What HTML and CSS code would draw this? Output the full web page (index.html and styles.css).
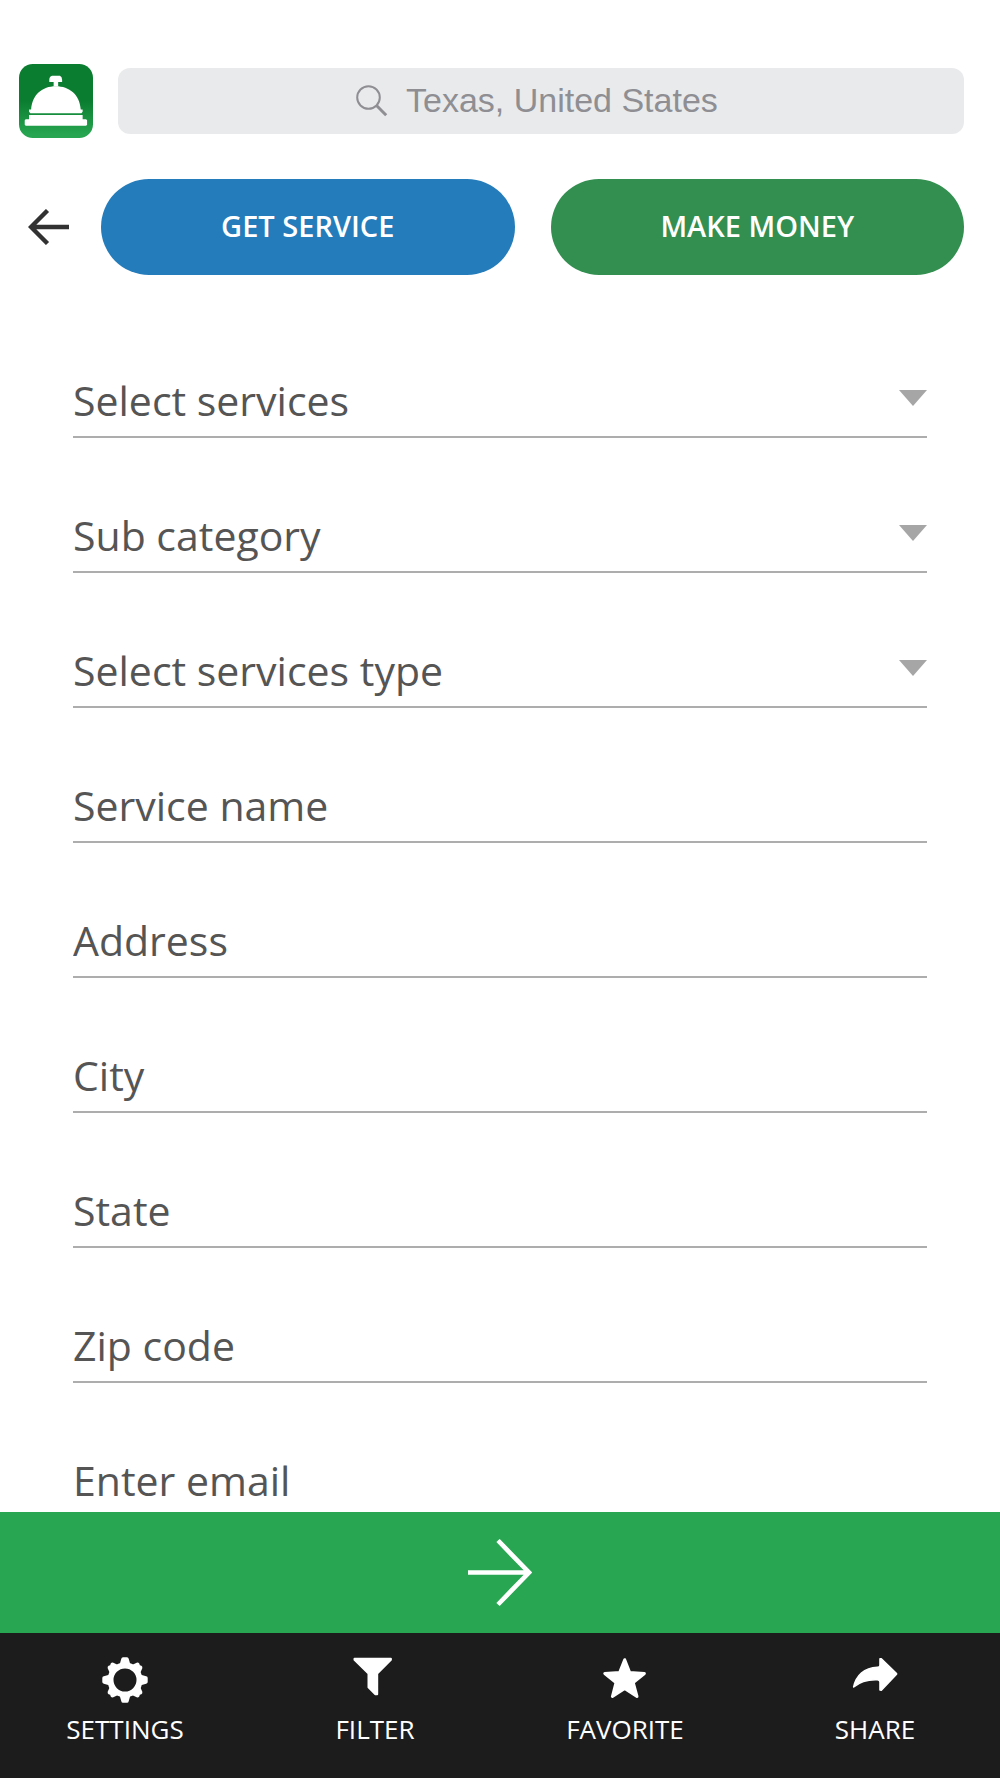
FILE: index.html
```html
<!DOCTYPE html>
<html lang="en">
<head>
<meta charset="utf-8">
<meta name="viewport" content="width=device-width, initial-scale=1">
<title>Get service</title>
<link rel="stylesheet" href="styles.css">
</head>
<body>
<div class="app">
  <header class="header">
    <div class="search-row">
      <svg class="logo" viewBox="0 0 75 75" role="img" aria-label="Service bell">
        <defs>
          <linearGradient id="logo-fill" x1="0" y1="0" x2="0" y2="1">
            <stop offset="0.5" stop-color="#0b7d30"/>
            <stop offset="0.95" stop-color="#27a550"/>
          </linearGradient>
        </defs>
        <rect width="75" height="75" rx="14" fill="url(#logo-fill)"/>
        <g fill="#fff">
          <path d="M33.500 12h8q2.200 1 2.200 4v2.300h-4v4.400h-4.600v-4.400h-4.400V16q0-3 2.800-4z"/>
          <path d="M12.300 46C13.500 31 23.500 22.500 37.300 22.500S61.500 31 62.600 46h1.900v2.500l-1.200 1.300H11.500L10.200 48.500V46z"/>
          <path d="M10.200 51.800h54.300V56h3.500l1 1v4.500l-1 1H6.800l-1-1V57l1-1h3.400z"/>
        </g>
      </svg>
      <label class="search">
        <svg class="search-icon" viewBox="0 0 32 32" aria-hidden="true">
          <circle cx="12.500" cy="12.500" r="11.300" fill="none" stroke="#8e8e93" stroke-width="2"/>
          <path d="M20.500 20.500l9.700 9.700" stroke="#8e8e93" stroke-width="3"/>
        </svg>
        <input class="search-input" type="text" placeholder="Texas, United States" aria-label="Location">
      </label>
    </div>
    <div class="tabs">
      <button class="back" type="button" aria-label="Back">
        <svg class="back-icon" viewBox="0 0 41 36" aria-hidden="true">
          <path d="M41 18H3M19.500 1.500L3 18l16.500 16.500" fill="none" stroke="#323232" stroke-width="4.400"/>
        </svg>
      </button>
      <button class="pill pill-blue" type="button">GET SERVICE</button>
      <button class="pill pill-green" type="button">MAKE MONEY</button>
    </div>
  </header>

  <form class="form" id="service-form">
    <div class="field">
      <select class="control" aria-label="Select services"><option>Select services</option></select>
      <svg class="caret" viewBox="0 0 28 16" aria-hidden="true"><path d="M0 0h28L14 16z" fill="#a6a6a6"/></svg>
    </div>
    <div class="field">
      <select class="control" aria-label="Sub category"><option>Sub category</option></select>
      <svg class="caret" viewBox="0 0 28 16" aria-hidden="true"><path d="M0 0h28L14 16z" fill="#a6a6a6"/></svg>
    </div>
    <div class="field">
      <select class="control" aria-label="Select services type"><option>Select services type</option></select>
      <svg class="caret" viewBox="0 0 28 16" aria-hidden="true"><path d="M0 0h28L14 16z" fill="#a6a6a6"/></svg>
    </div>
    <div class="field"><input class="control" type="text" placeholder="Service name" aria-label="Service name"></div>
    <div class="field"><input class="control" type="text" placeholder="Address" aria-label="Address"></div>
    <div class="field"><input class="control" type="text" placeholder="City" aria-label="City"></div>
    <div class="field"><input class="control" type="text" placeholder="State" aria-label="State"></div>
    <div class="field"><input class="control" type="text" placeholder="Zip code" aria-label="Zip code"></div>
    <div class="field"><input class="control" type="email" placeholder="Enter email" aria-label="Enter email"></div>
  </form>

  <button class="next" type="submit" form="service-form" aria-label="Next">
    <svg class="next-icon" viewBox="0 0 64 68" aria-hidden="true">
      <path d="M0 33.500h61M30 1.500L61 33.500 30 65.500" fill="none" stroke="#fff" stroke-width="4.600"/>
    </svg>
  </button>

  <nav class="nav">
    <a class="nav-item" href="#settings">
      <svg class="nav-icon" viewBox="0 0 46 46" aria-hidden="true">
        <defs>
          <path id="tooth" d="M17.500 8L19.300 1.800Q19.600.3 21 .3h4q1.400 0 1.700 1.500L28.500 8z"/>
          <path id="tooth-small" d="M17 8l2-5.500Q20 1 21.500 1.300L23 2l1.500-.7Q26 1 27 2.500L29 8z"/>
        </defs>
        <g fill="#fff">
          <use href="#tooth"/>
          <use href="#tooth" transform="rotate(90 23 23)"/>
          <use href="#tooth" transform="rotate(180 23 23)"/>
          <use href="#tooth" transform="rotate(270 23 23)"/>
          <use href="#tooth-small" transform="rotate(45 23 23)"/>
          <use href="#tooth-small" transform="rotate(135 23 23)"/>
          <use href="#tooth-small" transform="rotate(225 23 23)"/>
          <use href="#tooth-small" transform="rotate(315 23 23)"/>
        </g>
        <circle cx="23" cy="23" r="14.500" fill="none" stroke="#fff" stroke-width="6"/>
      </svg>
      SETTINGS
    </a>
    <a class="nav-item" href="#filter">
      <svg class="nav-icon" viewBox="0 0 46 46" aria-hidden="true">
        <path d="M2.500 1.700h36.400v1.100L25.200 16.600v20.600h-1.800l-6.900-6.900V16.600L2.500 2.800z" fill="#fff" stroke="#fff" stroke-width="2" stroke-linejoin="round"/>
      </svg>
      FILTER
    </a>
    <a class="nav-item" href="#favorite">
      <svg class="nav-icon" viewBox="0 0 46 46" aria-hidden="true">
        <path d="M22.700 2.700L27.600 15.400 42.400 16.500 31.200 25.500 35 39.500 22.700 31.500 10.400 39.500 14 25.500 2.800 16.500 17.700 15.400z" fill="#fff" stroke="#fff" stroke-width="3" stroke-linejoin="round"/>
      </svg>
      FAVORITE
    </a>
    <a class="nav-item" href="#share">
      <svg class="nav-icon" viewBox="0 0 46 46" aria-hidden="true">
        <path d="M28 1.900l1.300-.1L44.500 16.500v.8L29.300 33.200 28 33V25q0-2-2.500-2.200C14 22.300 7 25.500 1.700 30 4 19 12 10.700 25.500 10.200q2.500 0 2.500-2z" fill="#fff" stroke="#fff" stroke-width="1.600" stroke-linejoin="round"/>
      </svg>
      SHARE
    </a>
  </nav>
</div>
</body>
</html>
```

FILE: styles.css
```css
* {
  box-sizing: border-box;
}

body {
  margin: 0;
  background: #fff;
  font-family: "Open Sans", sans-serif;
}

button,
input,
select {
  margin: 0;
  padding: 0;
  border: 0;
  border-radius: 0;
  background: transparent;
  font-family: inherit;
}

svg {
  display: block;
  flex: none;
}

.app {
  display: flex;
  flex-direction: column;
  height: 100vh;
}

/* Header */
.header {
  display: flex;
  flex-direction: column;
  gap: 41px;
  padding: 64px 36px 0 19px;
}

.search-row {
  display: flex;
  align-items: center;
  gap: 25px;
}

.logo {
  width: 74px;
  height: 74px;
}

.search {
  display: flex;
  flex: 1;
  align-items: center;
  justify-content: center;
  gap: 18px;
  height: 66px;
  border-radius: 12px;
  background: #e9eaec;
}

.search-icon {
  width: 32px;
  height: 32px;
}

.search-input {
  width: 320px;
  padding-bottom: 2px;
  outline: 0;
  font-family: "Liberation Sans", sans-serif;
  font-size: 34px;
  line-height: 40px;
}

.search-input::placeholder {
  color: #8e8e93;
  opacity: 1;
}

.tabs {
  display: flex;
  align-items: center;
  padding-left: 9px;
}

.back {
  margin-right: 32px;
}

.back-icon {
  width: 41px;
  height: 36px;
}

.pill {
  flex: 1;
  height: 96px;
  padding-bottom: 3px;
  border-radius: 48px;
  color: #fff;
  font-size: 29px;
  font-weight: 600;
}

.pill + .pill {
  margin-left: 36px;
}

.pill-blue {
  background: #247cba;
}

.pill-green {
  background: #328f50;
}

/* Form */
.form {
  display: flex;
  flex: 1;
  flex-direction: column;
  gap: 68px;
  min-height: 0;
  padding: 96px 73px 68px;
  overflow-y: auto;
  scrollbar-width: none;
}

.field {
  display: grid;
  flex: none;
}

.control {
  grid-area: 1 / 1;
  width: 100%;
  height: 67px;
  padding-bottom: 8px;
  border-bottom: 2px solid #adadad;
  outline: 0;
  appearance: none;
  color: #555;
  font-size: 41px;
}

.control::placeholder {
  color: #555;
  opacity: 1;
}

.caret {
  grid-area: 1 / 1;
  justify-self: end;
  width: 28px;
  height: 16px;
  margin-top: 19px;
  pointer-events: none;
}

/* Bottom bars */
.next {
  display: flex;
  flex: none;
  align-items: center;
  justify-content: center;
  height: 121px;
  background: #28a651;
}

.next-icon {
  width: 64px;
  height: 68px;
}

.nav {
  display: grid;
  flex: none;
  grid-template-columns: repeat(4, 1fr);
  padding: 24px 0 31px;
  background: #1c1c1c;
}

.nav-item {
  display: flex;
  flex-direction: column;
  align-items: center;
  gap: 8px;
  color: #fff;
  font-size: 26px;
  line-height: 36px;
  text-decoration: none;
}

.nav-icon {
  width: 46px;
  height: 46px;
}
```
